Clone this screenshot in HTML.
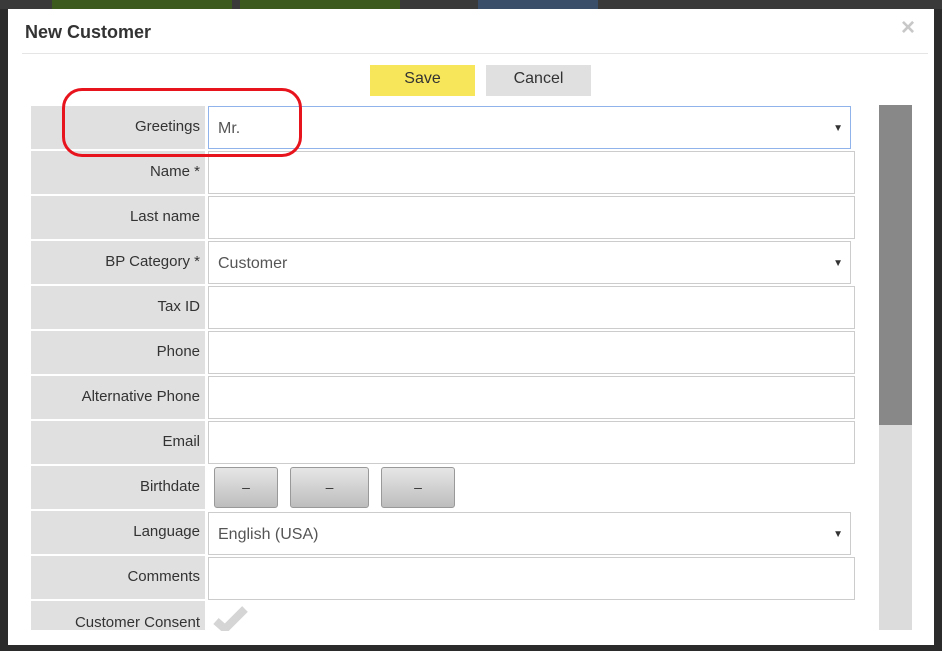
<!DOCTYPE html>
<html><head><style>
*{box-sizing:border-box;margin:0;padding:0}
body{width:942px;height:651px;overflow:hidden;background:#2b2b2b;font-family:"Liberation Sans",sans-serif;position:relative}
.a{position:absolute}
.modal{left:8px;top:9px;width:926px;height:636px;background:#fff}
.lab{position:absolute;left:31px;width:174px;height:43px;background:#e0e0e0;color:#333;font-size:15px;text-align:right;padding-right:5px}
.fld{position:absolute;left:208px;width:647px;height:43px;border:1px solid #ccc;background:#fff;font-size:16px;color:#555;padding-left:9px}
.sel{width:643px}
.arr{position:absolute;right:7px;font-size:10px;color:#333}
.db{position:absolute;top:467px;height:41px;border:1px solid #999;border-radius:3px;background:linear-gradient(#e6e6e6,#bdbdbd);text-align:center;line-height:38px;font-size:14px;color:#333}
</style></head><body>
<div class="a" style="left:0;top:0;width:942px;height:9px;background:#3a3a3a"></div>
<div class="a" style="left:52px;top:0;width:180px;height:9px;background:#3d5a1e"></div>
<div class="a" style="left:240px;top:0;width:160px;height:9px;background:#3d5a1e"></div>
<div class="a" style="left:478px;top:0;width:120px;height:9px;background:#3a4e6a"></div>
<div class="a modal"></div>
<div class="a" style="left:25px;top:22px;font-size:18px;font-weight:bold;color:#333">New Customer</div>
<div class="a" style="left:901px;top:14px;font-size:24px;font-weight:bold;color:#c8c8c8">×</div>
<div class="a" style="left:22px;top:53px;width:906px;height:1px;background:#e5e5e5"></div>
<div class="a" style="left:370px;top:65px;width:105px;height:31px;background:#f7e65a;text-align:center;line-height:27px;font-size:16px;color:#333">Save</div>
<div class="a" style="left:486px;top:65px;width:105px;height:31px;background:#e0e0e0;text-align:center;line-height:27px;font-size:16px;color:#333">Cancel</div>

<div class="lab" style="top:106px;line-height:42px">Greetings</div>
<div class="fld sel" style="top:106px;line-height:43px;border-color:#8fb3ea">Mr.<span class="arr">▼</span></div>
<div class="lab" style="top:151px;line-height:42px">Name *</div>
<div class="fld" style="top:151px"></div>
<div class="lab" style="top:196px;line-height:42px">Last name</div>
<div class="fld" style="top:196px"></div>
<div class="lab" style="top:241px;line-height:42px">BP Category *</div>
<div class="fld sel" style="top:241px;line-height:43px">Customer<span class="arr">▼</span></div>
<div class="lab" style="top:286px;line-height:42px">Tax ID</div>
<div class="fld" style="top:286px"></div>
<div class="lab" style="top:331px;line-height:42px">Phone</div>
<div class="fld" style="top:331px"></div>
<div class="lab" style="top:376px;line-height:42px">Alternative Phone</div>
<div class="fld" style="top:376px"></div>
<div class="lab" style="top:421px;line-height:42px">Email</div>
<div class="fld" style="top:421px"></div>
<div class="lab" style="top:466px;line-height:42px">Birthdate</div>
<div class="db" style="left:214px;width:64px">–</div>
<div class="db" style="left:290px;width:79px">–</div>
<div class="db" style="left:381px;width:74px">–</div>
<div class="lab" style="top:511px;line-height:42px">Language</div>
<div class="fld sel" style="top:512px;line-height:43px">English (USA)<span class="arr">▼</span></div>
<div class="lab" style="top:556px;line-height:42px">Comments</div>
<div class="fld" style="top:557px"></div>
<div class="lab" style="top:601px;height:29px;line-height:44px;overflow:hidden">Customer Consent</div>
<svg class="a" style="left:212px;top:605px" width="38" height="26"><path d="M4 16 L13 24 L33 4" stroke="#d5d5d5" stroke-width="8" fill="none"/></svg>
<div class="a" style="left:879px;top:105px;width:33px;height:525px;background:#dcdcdc"></div>
<div class="a" style="left:879px;top:105px;width:33px;height:320px;background:#888"></div>
<div class="a" style="left:62px;top:88px;width:240px;height:69px;border:3px solid #e8141d;border-radius:20px"></div>
</body></html>
